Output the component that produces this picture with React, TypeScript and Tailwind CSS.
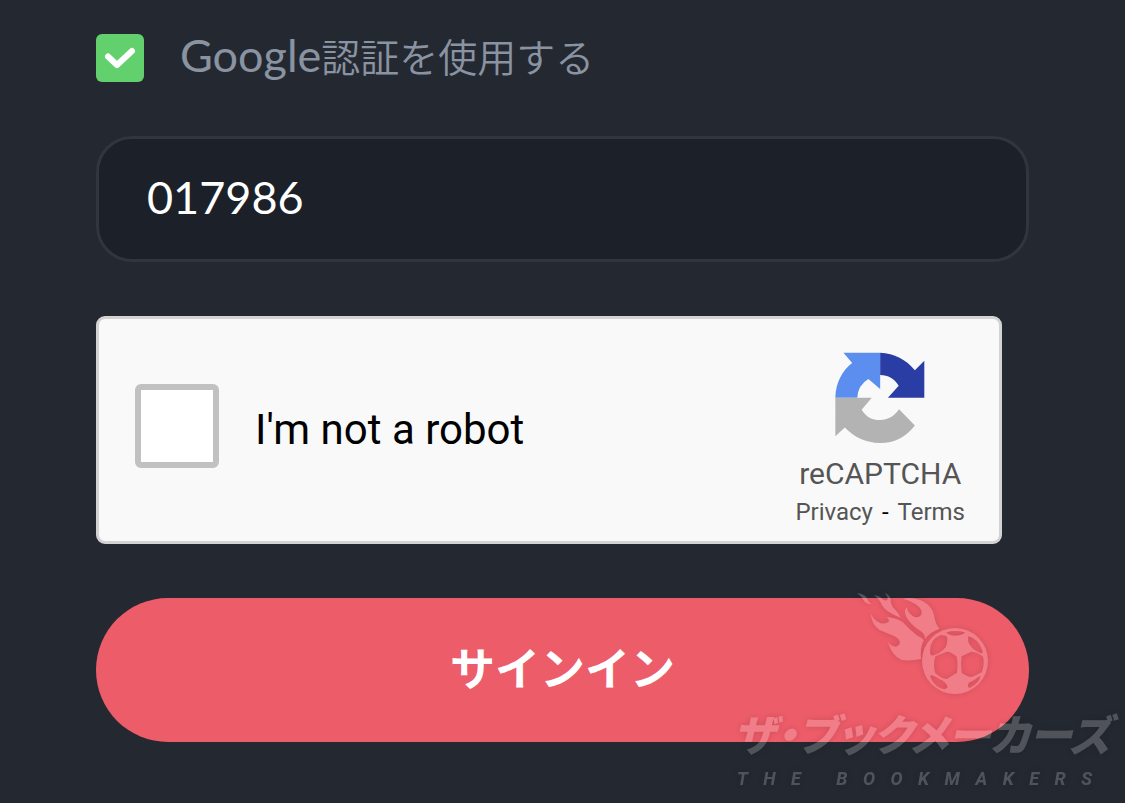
import { useState } from "react";

function RecaptchaLogo() {
  return (
    <svg viewBox="53 36 267 273" className="h-[92px] w-[90px]" aria-hidden="true">
      <path fill="#5b8eee" d="M78 38H187V146L152 116Q121 134 119 172H54C55 128 74 92 104 69Z" />
      <path fill="#2a3da5" d="M187 38C229 40 264 58 290 90L318 62V172H210L242 136C229 115 211 104 187 104Z" />
      <path fill="#b3b3b3" d="M54 172H162L132 207C145 228 163 238 187 238C210 237 229 227 243 206L290 254C264 288 231 306 187 306C144 305 108 288 82 260L54 286Z" />
    </svg>
  );
}

function FireballLogo() {
  return (
    <svg viewBox="50 30 399 321" className="h-[107px] w-[133px]" aria-hidden="true">
      <defs>
        <mask id="ball">
          <circle cx="347" cy="243" r="99" fill="#fff" />
          <g fill="#000">
            <path d="M288 229L322 215Q334 214 351 229Q357 243 353 278L322 297Q305 295 287 278Q281 252 288 229Z" />
            <path d="M367 229L396 215Q415 216 431 230Q437 252 427 277L398 291Q382 290 367 278Q363 252 367 229Z" />
            <path d="M272 218Q271 177 305 165L322 168Q327 183 319 202Q302 222 282 226Q273 228 272 218Z" />
            <path d="M386 169Q415 174 430 213Q431 222 422 219Q400 212 387 187Z" />
            <path d="M321 157Q347 149 377 157Q374 166 347 167Q325 166 321 157Z" />
            <path d="M272 287Q277 283 300 297Q321 305 325 322Q320 331 303 325Q279 312 272 287Z" />
            <path d="M423 287Q423 307 391 324Q380 320 390 307Q402 302 423 287Z" />
          </g>
        </mask>
      </defs>
      <rect x="240" y="135" width="210" height="216" fill="currentColor" mask="url(#ball)" />
      <g fill="currentColor">
        <path d="M53 39Q79 42 84 57Q87 66 97 73Q83 73 75 64Q67 49 53 39Z" />
        <path d="M104 46Q122 48 130 58Q140 66 146 56Q144 48 136 39Q154 46 154 60Q153 74 165 86Q176 96 184 113Q163 106 145 94Q130 83 124 67Q117 54 104 46Z" />
        <path d="M190 56Q223 49 253 65Q278 78 284 105Q287 130 300 146Q273 156 257 176Q260 162 238 149Q211 131 201 111Q192 92 202 82Q207 103 228 112Q249 112 247 94Q239 69 190 56Z" />
        <path d="M94 99Q101 120 124 130Q145 132 149 123Q148 114 138 112Q169 112 190 126Q210 148 232 166Q246 172 253 181Q241 207 245 237Q215 244 187 240Q157 228 145 183Q151 198 169 200Q184 196 181 184Q178 175 164 168Q139 158 119 149Q96 132 94 99Z" />
      </g>
    </svg>
  );
}

function Watermark() {
  return (
    <div
      aria-hidden="true"
      className="pointer-events-none absolute right-3 bottom-3 flex w-[380px] flex-col text-white opacity-20 drop-shadow-[0_0_3px_rgba(0,0,0,0.7)]"
    >
      <div className="flex justify-end pr-[124px]">
        <FireballLogo />
      </div>
      <p className="mt-2 text-[43px] leading-[54px] font-black whitespace-nowrap italic [font-family:'Noto_Sans_CJK_JP',sans-serif] [font-feature-settings:'palt']">
        ザ・ブックメーカーズ
      </p>
      <p className="mt-2 pl-1 text-[18px] leading-6 font-bold tracking-[0.86em] whitespace-nowrap italic [font-family:Roboto,sans-serif]">
        THE BOOKMAKERS
      </p>
    </div>
  );
}

export default function App() {
  const [useGoogle, setUseGoogle] = useState(true);
  const [robot, setRobot] = useState(false);
  const [code, setCode] = useState("017986");

  return (
    <main className="relative min-h-screen overflow-hidden bg-[#242931] px-24 pt-[34px] pb-[61px] [font-family:Lato,'Noto_Sans_CJK_JP',sans-serif]">
      <form className="flex flex-col gap-[54px]" onSubmit={(e) => e.preventDefault()}>
        <label className="flex h-12 items-center gap-9 text-[#8a93a1]">
          <span className="grid size-12 shrink-0">
            <input
              type="checkbox"
              checked={useGoogle}
              onChange={(e) => setUseGoogle(e.target.checked)}
              className="peer col-start-1 row-start-1 size-12 appearance-none rounded-md bg-[#1c2129] checked:bg-[#62d06d]"
            />
            <svg
              viewBox="0 0 48 48"
              className="pointer-events-none invisible col-start-1 row-start-1 size-12 peer-checked:visible"
              fill="none"
              stroke="#fff"
              strokeWidth="6"
              strokeLinecap="round"
              strokeLinejoin="round"
              aria-hidden="true"
            >
              <path d="M12 22.5L21 31L36 17" />
            </svg>
          </span>
          <span className="pb-1 text-[39px] leading-[48px] font-[350] whitespace-nowrap">
            <span className="text-[45px] font-normal">Google</span>認証を使用する
          </span>
        </label>

        <input
          type="text"
          inputMode="numeric"
          aria-label="認証コード"
          value={code}
          onChange={(e) => setCode(e.target.value)}
          className="h-[126px] w-full rounded-[36px] border-[3px] border-[#30353e] bg-[#1c2129] px-12 pb-1 text-[45px] text-white outline-none"
        />

        <section className="mr-[27px] flex h-[228px] items-center justify-between rounded-[9px] border-[3px] border-[#d3d3d3] bg-[#f9f9f9] pr-[34px] pl-9 [font-family:Roboto,sans-serif]">
          <label className="flex items-center gap-9 text-[42px] leading-[48px] whitespace-nowrap text-black">
            <input
              type="checkbox"
              checked={robot}
              onChange={(e) => setRobot(e.target.checked)}
              className="mb-2 size-[84px] appearance-none rounded-md border-[6px] border-[#c1c1c1] bg-white checked:bg-[#62d06d]"
            />
            I'm not a robot
          </label>
          <div className="flex flex-col items-center pt-5 text-[#555555]">
            <RecaptchaLogo />
            <p className="mt-3 text-[30px] leading-[36px]">reCAPTCHA</p>
            <p className="mt-1 flex gap-[9px] text-[24px] leading-[32px]">
              <a href="#privacy">Privacy</a>
              <span className="text-black">-</span>
              <a href="#terms">Terms</a>
            </p>
          </div>
        </section>

        <button
          type="submit"
          className="h-36 w-full rounded-full bg-[#ed5c69] text-[45px] font-bold text-white"
        >
          サインイン
        </button>
      </form>
      <Watermark />
    </main>
  );
}
